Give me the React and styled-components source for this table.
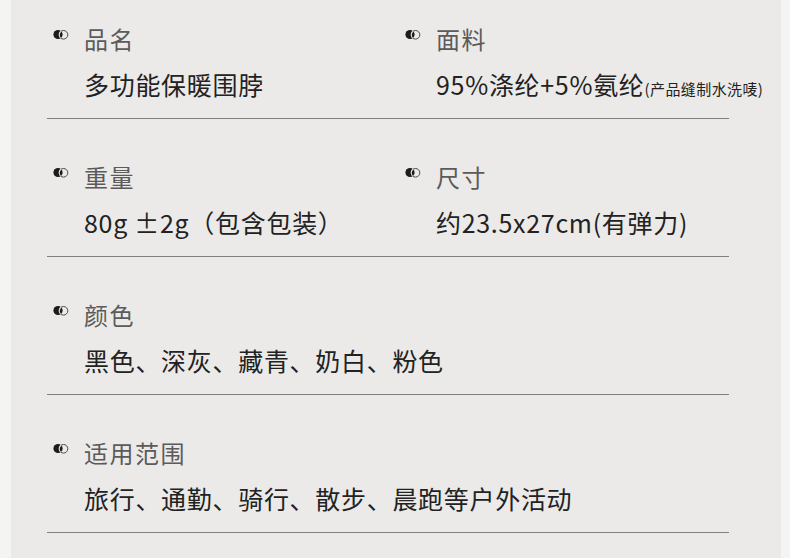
import React, { useId } from "react";
import styled, { createGlobalStyle } from "styled-components";

const GlobalStyle = createGlobalStyle`
    html, body {
        margin: 0;
        padding: 0;
        background: #f4f4f3;
    }
`;

const Page = styled.div`
    width: 790px;
    height: 558px;
    padding: 0 9px 0 11px;
    box-sizing: border-box;
    background: #f4f4f3;
    overflow: hidden;
`;

const Panel = styled.main`
    height: 100%;
    background: #ebeae8;
    padding: 0 52px 0 36px;
    font-family: "Noto Sans CJK SC", "Noto Sans", sans-serif;
`;

const Row = styled.section`
    display: grid;
    grid-template-columns: 352px 1fr;
    padding: 41px 0 18px;
    border-bottom: 1px solid #808080;

    &:first-child {
        padding-top: 22px;
    }
`;

const Field = styled.div`
    display: flex;
    flex-direction: column;
    gap: 14px;
    padding-left: 6px;
`;

const Label = styled.div`
    display: flex;
    align-items: center;
    height: 32px;
    font-size: 24px;
    color: #5b5b5b;
    letter-spacing: 1.5px;
`;

const Bullet = styled.svg`
    width: 16px;
    height: 11px;
    margin: -8px 15px 0 0;
    flex-shrink: 0;
`;

const Value = styled.div`
    height: 32px;
    line-height: 32px;
    padding-left: 31px;
    font-size: 25px;
    color: #222;
    white-space: nowrap;
    letter-spacing: 0.7px;
`;

const Note = styled.span`
    font-size: 15px;
    letter-spacing: 0.4px;
`;

const Dot = () => {
    const id = useId();
    return (
        <Bullet viewBox="0 0 16 11">
            <defs>
                <clipPath id={id}>
                    <circle cx="5" cy="5.5" r="4.6" />
                </clipPath>
            </defs>
            <circle cx="5" cy="5.5" r="4.6" fill="#1c1c1c" />
            <circle cx="10.5" cy="5.8" r="4.3" fill="none" stroke="#4a4a4a" strokeWidth="1" />
            <circle cx="10.5" cy="5.8" r="4.3" fill="none" stroke="#e6e6e4" strokeWidth="1.1" clipPath={`url(#${id})`} />
        </Bullet>
    );
};

const Spec = ({ label, children }) => (
    <Field>
        <Label>
            <Dot />
            {label}
        </Label>
        <Value>{children}</Value>
    </Field>
);

const App = () => {
    return (
        <>
            <GlobalStyle />
            <Page>
                <Panel>
                    <Row>
                        <Spec label="品名">多功能保暖围脖</Spec>
                        <Spec label="面料">
                            95%涤纶+5%氨纶<Note>(产品缝制水洗唛)</Note>
                        </Spec>
                    </Row>
                    <Row>
                        <Spec label="重量">80g ±2g（包含包装）</Spec>
                        <Spec label="尺寸">约23.5x27cm(有弹力)</Spec>
                    </Row>
                    <Row>
                        <Spec label="颜色">黑色、深灰、藏青、奶白、粉色</Spec>
                    </Row>
                    <Row>
                        <Spec label="适用范围">旅行、通勤、骑行、散步、晨跑等户外活动</Spec>
                    </Row>
                </Panel>
            </Page>
        </>
    );
};

export default App;
